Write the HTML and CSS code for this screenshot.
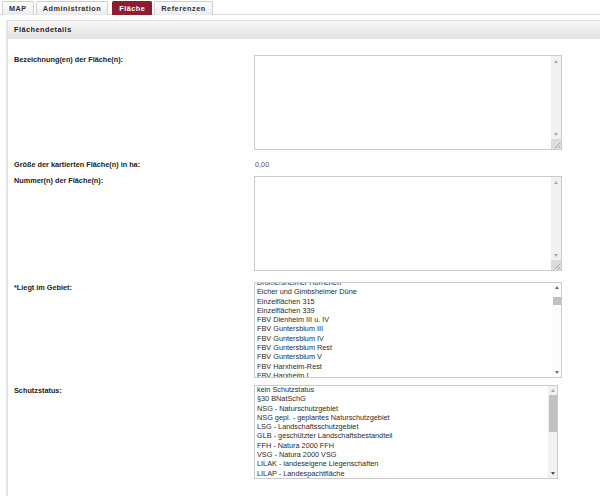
FILE: index.html
```html
<!DOCTYPE html>
<html lang="de">
<head>
<meta charset="utf-8">
<title>Flächendetails</title>
<link rel="stylesheet" href="styles.css">
</head>
<body>
<div class="tabs">
  <a class="tab">MAP</a>
  <a class="tab">Administration</a>
  <a class="tab active">Fläche</a>
  <a class="tab">Referenzen</a>
</div>
<div class="panel">
  <div class="panel-head">Flächendetails</div>
  <div class="form">
    <div class="row">
      <div class="label">Bezeichnung(en) der Fläche(n):</div>
      <div class="box area">
        <textarea class="area-input"></textarea>
        <div class="vscroll ta">
          <div class="btn btn-ta"><span class="up off"></span></div>
          <div class="track"></div>
          <div class="btn btn-ta"><span class="down off"></span></div>
          <div class="corner"><svg width="10" height="10" viewBox="0 0 10 10"><path d="M9 4 L4 9 M9 7 L7 9" stroke="#9a9a9a" stroke-width="0.8" fill="none"/></svg></div>
        </div>
      </div>
    </div>
    <div class="row r2">
      <div class="label">Größe der kartierten Fläche(n) in ha:</div>
      <div class="value">0,00</div>
    </div>
    <div class="row r3">
      <div class="label">Nummer(n) der Fläche(n):</div>
      <div class="box area">
        <textarea class="area-input"></textarea>
        <div class="vscroll ta">
          <div class="btn btn-ta"><span class="up off"></span></div>
          <div class="track"></div>
          <div class="btn btn-ta"><span class="down off"></span></div>
          <div class="corner"><svg width="10" height="10" viewBox="0 0 10 10"><path d="M9 4 L4 9 M9 7 L7 9" stroke="#9a9a9a" stroke-width="0.8" fill="none"/></svg></div>
        </div>
      </div>
    </div>
    <div class="row r4">
      <div class="label">*Liegt im Gebiet:</div>
      <div class="box list list1">
        <ul class="items items1">
          <li>Dromersheimer Hörnchen</li>
          <li>Eicher und Gimbsheimer Düne</li>
          <li>Einzelflächen 315</li>
          <li>Einzelflächen 339</li>
          <li>FBV Dienheim III u. IV</li>
          <li>FBV Guntersblum III</li>
          <li>FBV Guntersblum IV</li>
          <li>FBV Guntersblum Rest</li>
          <li>FBV Guntersblum V</li>
          <li>FBV Harxheim-Rest</li>
          <li>FBV Harxheim I</li>
        </ul>
        <div class="vscroll sel light">
          <div class="btn"><span class="up"></span></div>
          <div class="track"><div class="thumb thumb1"></div></div>
          <div class="btn"><span class="down"></span></div>
        </div>
      </div>
    </div>
    <div class="row r5">
      <div class="label">Schutzstatus:</div>
      <div class="box list list2">
        <ul class="items items2">
          <li>kein Schutzstatus</li>
          <li>§30 BNatSchG</li>
          <li>NSG - Naturschutzgebiet</li>
          <li>NSG gepl. - geplantes Naturschutzgebiet</li>
          <li>LSG - Landschaftsschutzgebiet</li>
          <li>GLB - geschützter Landschaftsbestandteil</li>
          <li>FFH - Natura 2000 FFH</li>
          <li>VSG - Natura 2000 VSG</li>
          <li>LILAK - landeseigene Liegenschaften</li>
          <li>LILAP - Landespachtfläche</li>
        </ul>
        <div class="vscroll sel">
          <div class="btn"><span class="up off"></span></div>
          <div class="track"><div class="thumb thumb2"></div></div>
          <div class="btn"><span class="down dark"></span></div>
        </div>
      </div>
    </div>
  </div>
</div>
</body>
</html>
```
FILE: styles.css
```css
html, body {
  margin: 0;
  padding: 0;
  background: #fff;
  font-family: "Liberation Sans", Arial, sans-serif;
  color: #222;
}

.tabs {
  display: flex;
  gap: 2px;
  padding: 1px 0 0 2px;
  height: 13px;
  border-bottom: 1px solid #d9d9d9;
}

.tab {
  display: block;
  box-sizing: border-box;
  height: 14px;
  margin-bottom: -1px;
  padding: 0 6px;
  border: 1px solid #cfcfcf;
  border-bottom: 0;
  border-radius: 2px 2px 0 0;
  background: linear-gradient(#fefefe, #ececec);
  color: #333;
  font-weight: bold;
  font-size: 7.3px;
  line-height: 13px;
  letter-spacing: 0.5px;
  cursor: pointer;
}

.tab.active {
  margin-left: 2px;
  background: #8f1d2f;
  border-color: #8f1d2f;
  color: #fff;
}

.panel {
  margin: 5px 0 0 6px;
  border-left: 2px solid #e4e4e4;
  min-height: 477px;
}

.panel-head {
  box-sizing: border-box;
  height: 19px;
  padding-left: 6px;
  border-top: 1px solid #e3e0d8;
  background: linear-gradient(#f7f7f7, #e3e3e3);
  font-weight: bold;
  font-size: 7.3px;
  line-height: 18px;
  letter-spacing: 0.5px;
  color: #222;
}

.form {
  padding: 16px 0 0 6px;
}

.row {
  display: grid;
  grid-template-columns: 240px auto;
  align-items: start;
}

.r2 { margin-top: 10px; }
.r3 { margin-top: 7px; }
.r4 { margin-top: 11px; }
.r5 { margin-top: 7px; }

.label {
  font-weight: bold;
  font-size: 7.3px;
  line-height: 9px;
  color: #222;
}

.r4 .label, .r5 .label {
  padding-top: 1px;
}

.value {
  padding-left: 1px;
  font-size: 7.3px;
  line-height: 9px;
  color: #555;
}

.box {
  box-sizing: border-box;
  display: flex;
  border: 1px solid #cbcbcb;
  background: #fff;
  overflow: hidden;
}

.area {
  width: 308px;
  height: 95px;
}

.area-input {
  flex: 1;
  margin: 0;
  padding: 0;
  border: 0;
  outline: none;
  resize: none;
  background: transparent;
  font-family: "Liberation Sans", Arial, sans-serif;
  font-size: 7.3px;
}

.list1 {
  width: 308px;
  height: 96px;
}

.list2 {
  width: 304px;
  height: 94px;
}

.items {
  flex: 1;
  list-style: none;
  margin: 0;
  padding: 0 0 0 2px;
  font-size: 7.3px;
  line-height: 9.3px;
  color: #2e2a2a;
  white-space: nowrap;
  overflow: hidden;
}

.items1 li:first-child { margin-top: -5px; }
.items2 li:first-child { margin-top: -1px; }

.vscroll {
  display: flex;
  flex-direction: column;
  width: 9px;
  background: #f1f1f1;
}

.vscroll.ta {
  width: 10px;
}

.vscroll.light {
  background: #fbfbfb;
}

.btn {
  display: flex;
  align-items: center;
  justify-content: center;
  height: 9px;
  flex: none;
}

.btn-ta {
  height: 10px;
}

.track {
  flex: 1;
  display: flex;
  flex-direction: column;
  align-items: center;
}

.thumb {
  width: 8px;
  background: #c1c1c1;
}

.thumb1 {
  margin-top: 5px;
  height: 8px;
}

.thumb2 {
  height: 37px;
}

.up, .down {
  width: 0;
  height: 0;
  border-left: 2.5px solid transparent;
  border-right: 2.5px solid transparent;
}

.up { border-bottom: 3px solid #6e6e6e; }
.down { border-top: 3px solid #6e6e6e; }
.up.off { border-bottom-color: #a8a8a8; }
.down.off { border-top-color: #a8a8a8; }
.down.dark { border-top-color: #505050; }

.corner {
  flex: none;
  height: 10px;
  background: #dcdcdc;
}

.corner svg {
  display: block;
}
```
